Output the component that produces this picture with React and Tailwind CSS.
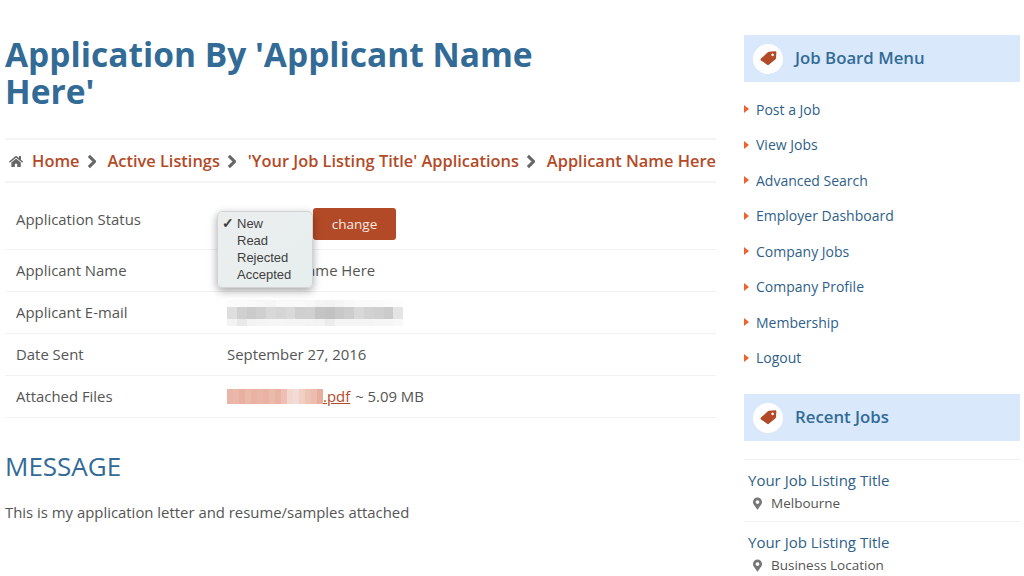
import React from "react";
import { FaHome, FaMapMarkerAlt } from "react-icons/fa";

const menu = ["Post a Job", "View Jobs", "Advanced Search", "Employer Dashboard", "Company Jobs", "Company Profile", "Membership", "Logout"];
const crumbs = ["Home", "Active Listings", "'Your Job Listing Title' Applications", "Applicant Name Here"];

const emailTop = ["#fbfbfb","#fbfbfb","#fafafa","#f7f7f7","#f6f6f6","#fafafa","#f9f9f9","#fafafa","#f8f8f8","#f4f4f4","#f3f3f3","#f5f5f5","#f8f8f8","#fafafa","#fafafa","#fbfbfb","#fcfcfc","#fdfdfd"];
const emailMid = ["#dedede","#d0d0d0","#cbcbcb","#d0d0d0","#d8d8d8","#d5d5d5","#d9d9d9","#cfcfcf","#d0d0d0","#c4c4c4","#c2c2c2","#c8c8c8","#cdcdcd","#d8d8d8","#d2d2d2","#cfcfcf","#cbcbcb","#e4e4e4"];
const emailBot = ["#f3f3f3","#e9e9e9","#f3f3f3","#f5f5f5","#f6f6f6","#f6f6f6","#f5f5f5","#f5f5f5","#f4f4f4","#f3f3f3","#ececec","#f4f4f4","#f5f5f5","#f5f5f5","#f5f5f5","#f6f6f6","#f6f6f6","#f8f8f8"];
const fileCols = ["#e9b5a6","#eab8a8","#e8b0a0","#ebb9aa","#e9b2a3","#eab6a7","#e9b3a4","#ebbaab","#e8b3a4","#eebfb2","#f3d6cd","#f3dcd5","#f0cfc5","#eec3b6","#ecbcae","#e8ae9d"];

function Row({ label, children }) {
  return (
    <div className="flex items-center h-[42px] border-b border-[#f2f2f2]">
      <div className="w-[222px] pl-[11px] shrink-0">{label}</div>
      <div className="flex-1 flex items-center">{children}</div>
    </div>
  );
}

function TagIcon() {
  return (
    <svg width="17" height="15" viewBox="0 0 17 15">
      <path fill="#b34a27" fillRule="evenodd" d="M1 7.6 7.8 1.3 Q8.3 .9 9 .8 L15 .3 Q16.4 .2 16.4 1.6 L16 7 Q16 7.8 15.5 8.2 L8.8 13.8 Q8 14.5 7.1 13.8 L1 9.4 Q0 8.5 1 7.6Z M12.6 2.6 a1.3 1.3 0 1 0 .01 0Z" />
    </svg>
  );
}

function SideHead({ children }) {
  return (
    <div className="h-[47px] bg-[#d9e8fb] flex items-center pl-[9px]">
      <span className="w-[30px] h-[30px] rounded-full bg-white flex items-center justify-center">
        <TagIcon />
      </span>
      <span className="ml-[12px] text-[#336b97] text-[16.8px] font-semibold leading-none">{children}</span>
    </div>
  );
}

export default function App() {
  return (
    <div className="w-[1024px] h-[576px] overflow-hidden bg-white text-[#555555] text-[14.9px] flex font-['Open_Sans',sans-serif]">
      <main className="w-[711px] ml-[5px] shrink-0">
        <h1 className="mt-[36px] text-[33.5px] leading-[37px] font-bold text-[#336b97] w-[600px]">
          Application By 'Applicant Name Here'
        </h1>
        <nav className="mt-[28px] h-[45px] pt-[2px] border-y-2 border-[#f4f4f4] flex items-center whitespace-nowrap text-[16.4px] font-semibold text-[#b34a27]">
          <FaHome className="ml-[4px] mr-[9px] text-[#666666] text-[15px]" />
          {crumbs.map((c, i) => (
            <React.Fragment key={c}>
              {i > 0 && (
                <svg className="ml-[7px] mr-[11.5px]" width="10" height="15" viewBox="0 0 10 15">
                  <path d="M2 1.5 8 7.5 2 13.5" fill="none" stroke="#666666" strokeWidth="3.2" />
                </svg>
              )}
              <span>{c}</span>
            </React.Fragment>
          ))}
        </nav>
        <div className="relative">
          <div className="flex items-start h-[67px] border-b border-[#f2f2f2] pt-[25px]">
            <div className="w-[222px] pl-[11px] leading-[24px] shrink-0 -mt-[1px]">Application Status</div>
            <button className="ml-[86px] w-[83px] h-[32px] bg-[#b34a27] text-[#f8e9e2] text-[13.5px] rounded-[3px] shrink-0">change</button>
          </div>
          <Row label="Applicant Name"><span>Applicant Name Here</span></Row>
          <Row label="Applicant E-mail">
            <div className="flex flex-col w-[176px] blur-[0.6px]">
              {[emailTop, emailMid, emailBot].map((row, r) => (
                <div key={r} className={r === 1 ? "flex h-[12px]" : "flex h-[7px]"}>
                  {row.map((c, i) => <span key={i} className="h-full flex-1" style={{ backgroundColor: c }} />)}
                </div>
              ))}
            </div>
          </Row>
          <Row label="Date Sent">September 27, 2016</Row>
          <Row label="Attached Files">
            <span className="flex blur-[0.6px]" aria-hidden="true">
              {fileCols.map((c, i) => <span key={i} className="block w-[6px] h-[15px]" style={{ backgroundColor: c }} />)}
            </span>
            <span className="text-[#b34a27] underline">.pdf</span>
            <span className="ml-[5px]">~ 5.09 MB</span>
          </Row>
          <div className="absolute left-[212px] top-[28px] w-[96px] h-[77px] rounded-[5px] border border-[#d2d4d4] bg-gradient-to-br from-[#eceeee] to-[#e6eeee] shadow-[0_3px_8px_rgba(0,0,0,0.35)] text-[13px] leading-[17px] text-[#3f3f3f] py-[3px] font-['Liberation_Sans',sans-serif]">
            <div className="pl-[19px] relative"><span className="absolute left-[4px] text-[14px] font-bold">✓</span>New</div>
            <div className="pl-[19px]">Read</div>
            <div className="pl-[19px]">Rejected</div>
            <div className="pl-[19px]">Accepted</div>
          </div>
        </div>
        <h2 className="mt-[32px] text-[26px] leading-[33px] text-[#336b97]">MESSAGE</h2>
        <p className="mt-[17px] leading-[24px]">This is my application letter and resume/samples attached</p>
      </main>
      <aside className="ml-[28px] w-[276px] shrink-0 pt-[35px]">
        <SideHead>Job Board Menu</SideHead>
        <ul className="mt-[9.5px] text-[#2f5f88] text-[14px]">
          {menu.map((m) => (
            <li key={m} className="h-[35.5px] flex items-center">
              <span className="w-0 h-0 border-y-[4px] border-y-transparent border-l-[5px] border-l-[#f0622d]" />
              <span className="ml-[7px]">{m}</span>
            </li>
          ))}
        </ul>
        <div className="mt-[18.5px]"><SideHead>Recent Jobs</SideHead></div>
        <div className="mt-[18px]">
          {[["Your Job Listing Title", "Melbourne"], ["Your Job Listing Title", "Business Location"]].map(([t, l]) => (
            <div key={l} className="border-t border-[#f2f2f2] h-[62px] pl-[4px] pt-[9px]">
              <div className="text-[#2f5f88] text-[15px] leading-[22px]">{t}</div>
              <div className="flex items-center text-[13.5px] leading-[20px] mt-[2px]">
                <FaMapMarkerAlt className="ml-[5px] mr-[9px] text-[#777777] w-[9px] h-[13px]" />
                {l}
              </div>
            </div>
          ))}
        </div>
      </aside>
    </div>
  );
}
